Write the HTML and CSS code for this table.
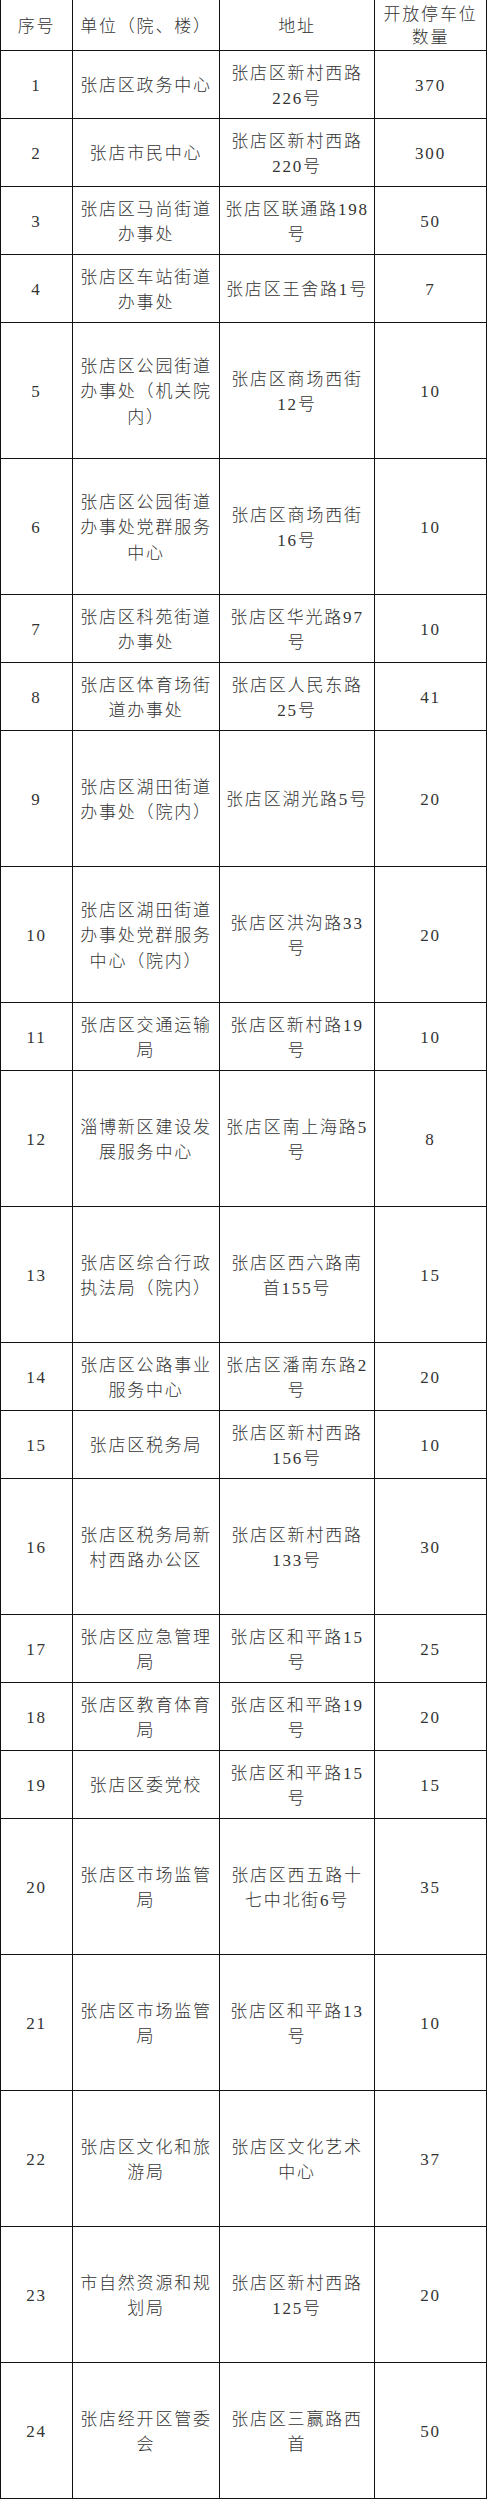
FILE: index.html
```html
<!DOCTYPE html>
<html lang="zh-CN">
<head>
<meta charset="utf-8">
<title>开放停车位</title>
<link rel="stylesheet" href="styles.css">
</head>
<body>
<div class="sheet">
  <div class="row head">
    <div class="cell">序号</div>
    <div class="cell">单位（院、楼）</div>
    <div class="cell">地址</div>
    <div class="cell">开放停车位<br>数量</div>
  </div>
  <div class="row short">
    <div class="cell">1</div>
    <div class="cell">张店区政务中心</div>
    <div class="cell">张店区新村西路<br>226号</div>
    <div class="cell">370</div>
  </div>
  <div class="row short">
    <div class="cell">2</div>
    <div class="cell">张店市民中心</div>
    <div class="cell">张店区新村西路<br>220号</div>
    <div class="cell">300</div>
  </div>
  <div class="row short">
    <div class="cell">3</div>
    <div class="cell">张店区马尚街道<br>办事处</div>
    <div class="cell">张店区联通路198<br>号</div>
    <div class="cell">50</div>
  </div>
  <div class="row short">
    <div class="cell">4</div>
    <div class="cell">张店区车站街道<br>办事处</div>
    <div class="cell">张店区王舍路1号</div>
    <div class="cell">7</div>
  </div>
  <div class="row tall">
    <div class="cell">5</div>
    <div class="cell">张店区公园街道<br>办事处（机关院<br>内）</div>
    <div class="cell">张店区商场西街<br>12号</div>
    <div class="cell">10</div>
  </div>
  <div class="row tall">
    <div class="cell">6</div>
    <div class="cell">张店区公园街道<br>办事处党群服务<br>中心</div>
    <div class="cell">张店区商场西街<br>16号</div>
    <div class="cell">10</div>
  </div>
  <div class="row short">
    <div class="cell">7</div>
    <div class="cell">张店区科苑街道<br>办事处</div>
    <div class="cell">张店区华光路97<br>号</div>
    <div class="cell">10</div>
  </div>
  <div class="row short">
    <div class="cell">8</div>
    <div class="cell">张店区体育场街<br>道办事处</div>
    <div class="cell">张店区人民东路<br>25号</div>
    <div class="cell">41</div>
  </div>
  <div class="row tall">
    <div class="cell">9</div>
    <div class="cell">张店区湖田街道<br>办事处（院内）</div>
    <div class="cell">张店区湖光路5号</div>
    <div class="cell">20</div>
  </div>
  <div class="row tall">
    <div class="cell">10</div>
    <div class="cell">张店区湖田街道<br>办事处党群服务<br>中心（院内）</div>
    <div class="cell">张店区洪沟路33<br>号</div>
    <div class="cell">20</div>
  </div>
  <div class="row short">
    <div class="cell">11</div>
    <div class="cell">张店区交通运输<br>局</div>
    <div class="cell">张店区新村路19<br>号</div>
    <div class="cell">10</div>
  </div>
  <div class="row tall">
    <div class="cell">12</div>
    <div class="cell">淄博新区建设发<br>展服务中心</div>
    <div class="cell">张店区南上海路5<br>号</div>
    <div class="cell">8</div>
  </div>
  <div class="row tall">
    <div class="cell">13</div>
    <div class="cell">张店区综合行政<br>执法局（院内）</div>
    <div class="cell">张店区西六路南<br>首155号</div>
    <div class="cell">15</div>
  </div>
  <div class="row short">
    <div class="cell">14</div>
    <div class="cell">张店区公路事业<br>服务中心</div>
    <div class="cell">张店区潘南东路2<br>号</div>
    <div class="cell">20</div>
  </div>
  <div class="row short">
    <div class="cell">15</div>
    <div class="cell">张店区税务局</div>
    <div class="cell">张店区新村西路<br>156号</div>
    <div class="cell">10</div>
  </div>
  <div class="row tall">
    <div class="cell">16</div>
    <div class="cell">张店区税务局新<br>村西路办公区</div>
    <div class="cell">张店区新村西路<br>133号</div>
    <div class="cell">30</div>
  </div>
  <div class="row short">
    <div class="cell">17</div>
    <div class="cell">张店区应急管理<br>局</div>
    <div class="cell">张店区和平路15<br>号</div>
    <div class="cell">25</div>
  </div>
  <div class="row short">
    <div class="cell">18</div>
    <div class="cell">张店区教育体育<br>局</div>
    <div class="cell">张店区和平路19<br>号</div>
    <div class="cell">20</div>
  </div>
  <div class="row short">
    <div class="cell">19</div>
    <div class="cell">张店区委党校</div>
    <div class="cell">张店区和平路15<br>号</div>
    <div class="cell">15</div>
  </div>
  <div class="row tall">
    <div class="cell">20</div>
    <div class="cell">张店区市场监管<br>局</div>
    <div class="cell">张店区西五路十<br>七中北街6号</div>
    <div class="cell">35</div>
  </div>
  <div class="row tall">
    <div class="cell">21</div>
    <div class="cell">张店区市场监管<br>局</div>
    <div class="cell">张店区和平路13<br>号</div>
    <div class="cell">10</div>
  </div>
  <div class="row tall">
    <div class="cell">22</div>
    <div class="cell">张店区文化和旅<br>游局</div>
    <div class="cell">张店区文化艺术<br>中心</div>
    <div class="cell">37</div>
  </div>
  <div class="row tall">
    <div class="cell">23</div>
    <div class="cell">市自然资源和规<br>划局</div>
    <div class="cell">张店区新村西路<br>125号</div>
    <div class="cell">20</div>
  </div>
  <div class="row tall">
    <div class="cell">24</div>
    <div class="cell">张店经开区管委<br>会</div>
    <div class="cell">张店区三赢路西<br>首</div>
    <div class="cell">50</div>
  </div>
</div>
</body>
</html>
```

FILE: styles.css
```css
html, body {
  margin: 0;
  padding: 0;
  background: #ffffff;
}

.sheet {
  width: 487px;
  box-sizing: border-box;
  border-left: 1px solid #111;
  font-family: "Liberation Serif", "Noto Sans CJK SC", serif;
  font-size: 17px;
  font-weight: 300;
  letter-spacing: 1.8px;
  color: #333333;
}

.row {
  display: grid;
  grid-template-columns: 72px 147px 155px 112px;
  box-sizing: border-box;
  border-bottom: 1px solid #111;
}

.head { height: 51px; }
.short { height: 68px; }
.tall { height: 136px; }

.cell {
  box-sizing: border-box;
  border-right: 1px solid #111;
  display: flex;
  align-items: center;
  justify-content: center;
  text-align: center;
  white-space: nowrap;
  line-height: 25.5px;
  padding-top: 3px;
}

.head .cell {
  line-height: 23px;
  padding-top: 2px;
}
```
